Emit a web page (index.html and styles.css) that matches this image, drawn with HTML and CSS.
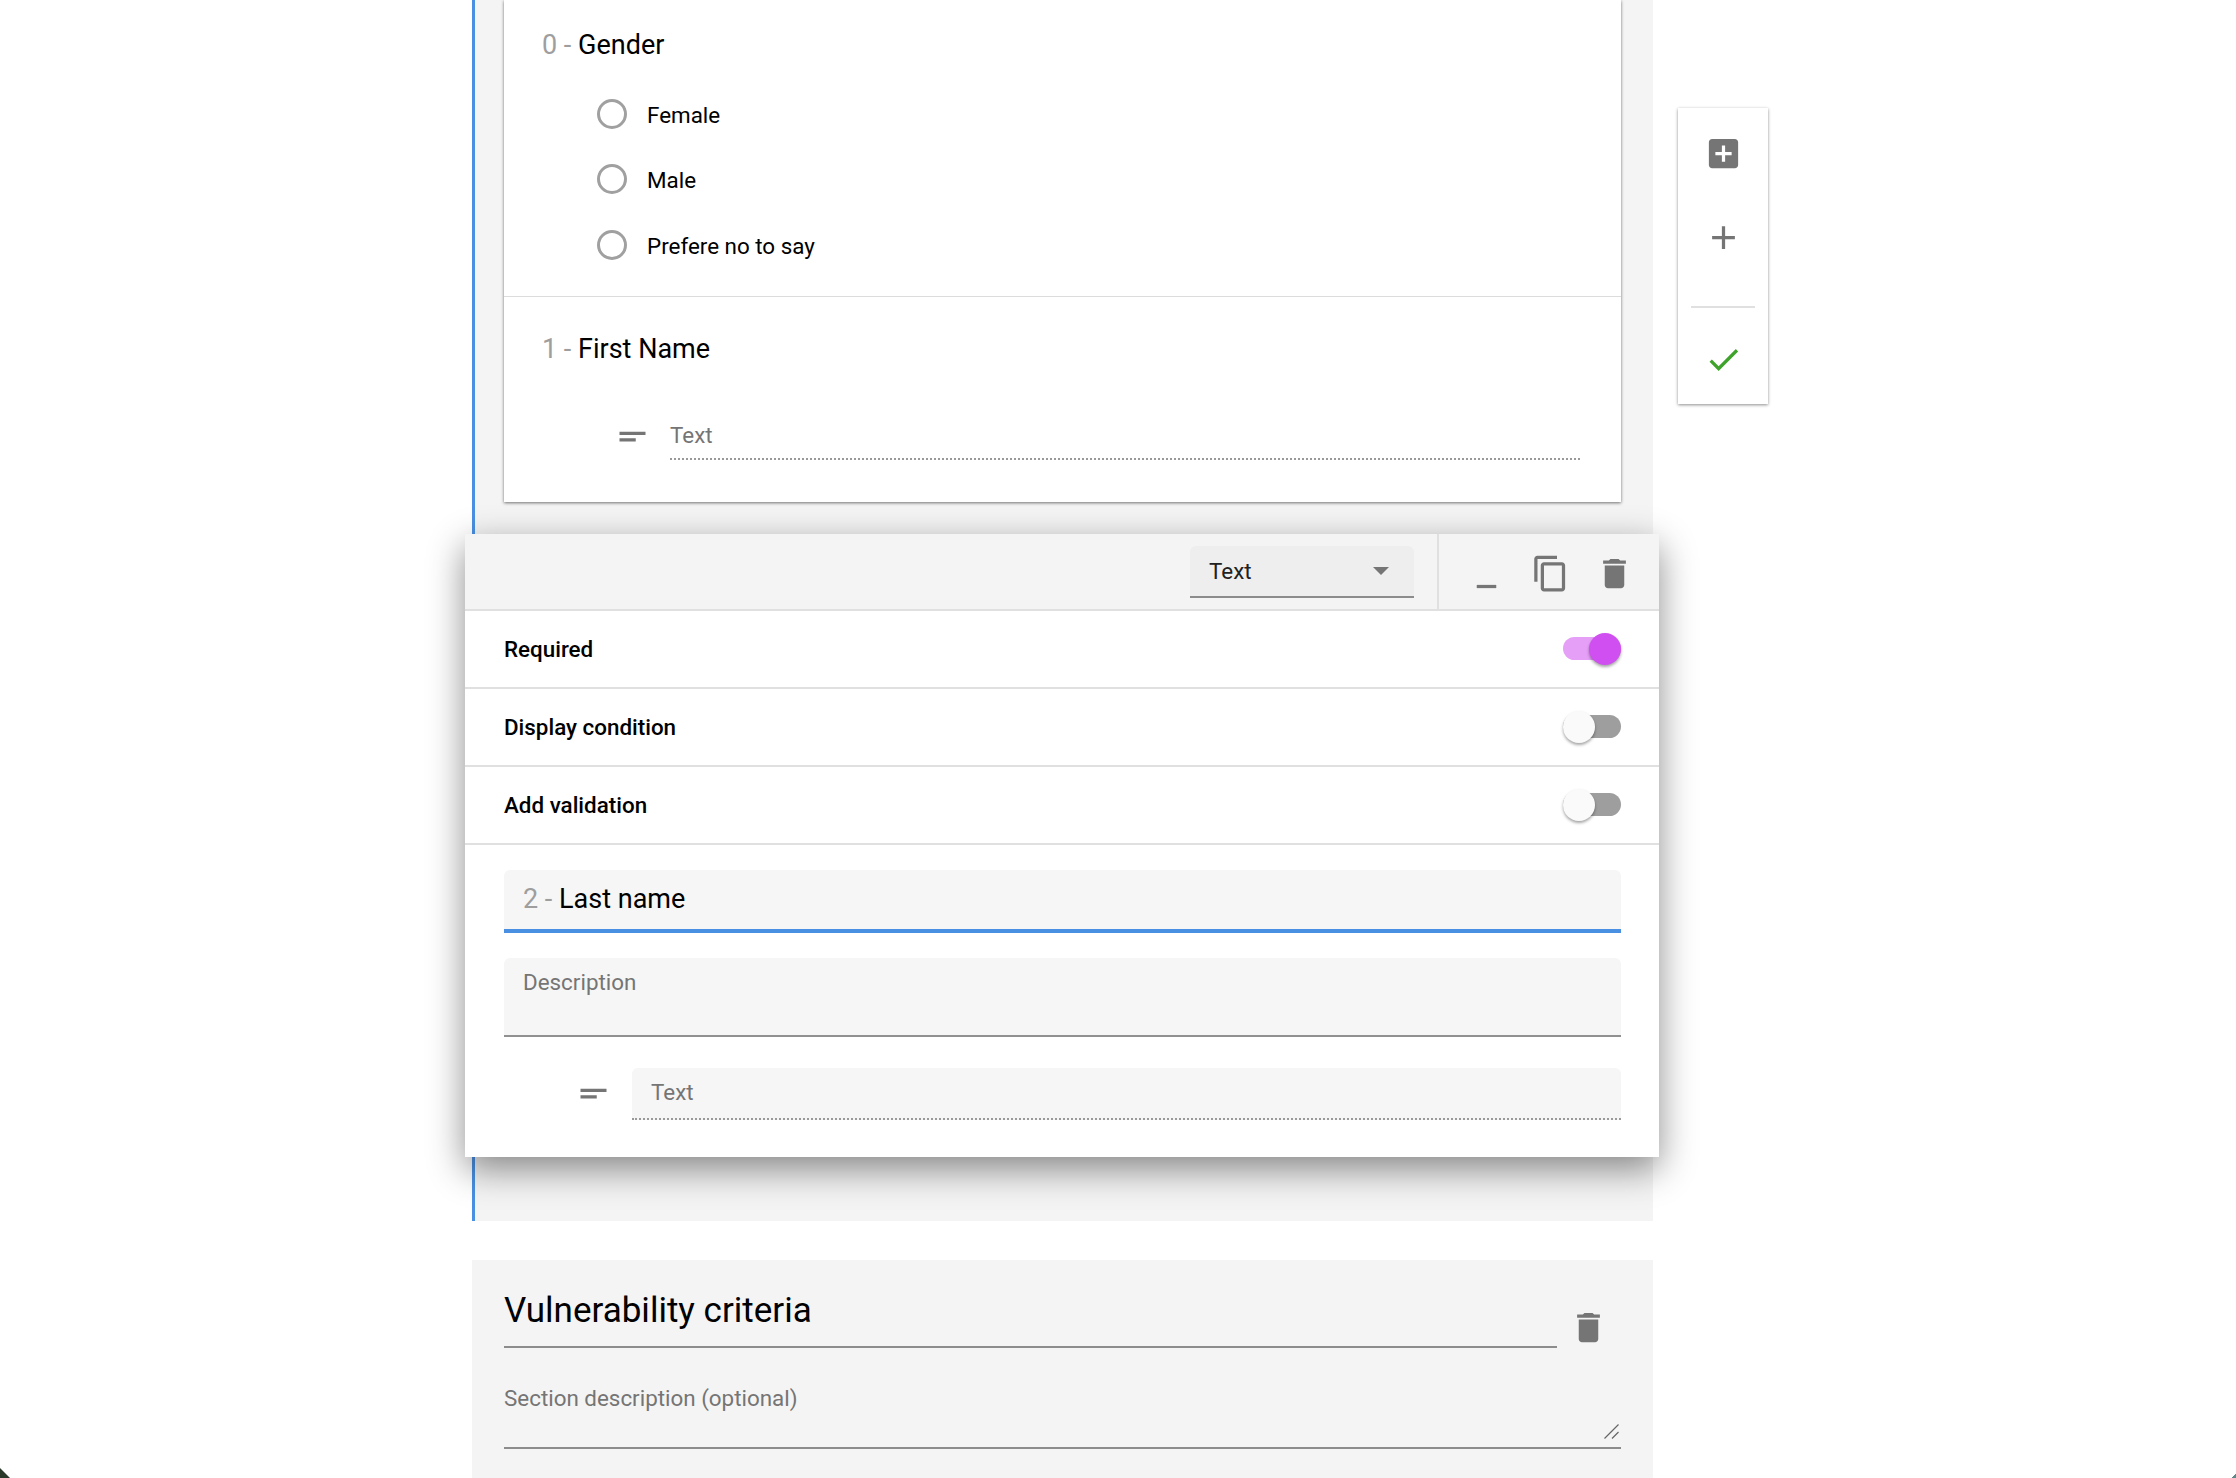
FILE: index.html
```html
<!DOCTYPE html>

<html>
<head>
  <meta http-equiv="CONTENT-TYPE" content="text/html; charset=UTF-8">
  <meta name="viewport" content="width=device-width, initial-scale=1.0"/>
  <title>Form builder</title>
  <link rel="stylesheet" href="styles.css">
</head>
<body>
  <div class="layout">
    <div class="main">
      <section class="section-active">
        <div class="questions">
          <div class="question question-first">
            <div class="q-title"><span class="q-num">0 - </span>Gender</div>
            <div class="option"><span class="radio"></span>Female</div>
            <div class="option"><span class="radio"></span>Male</div>
            <div class="option"><span class="radio"></span>Prefere no to say</div>
          </div>
          <div class="question question-second">
            <div class="q-title"><span class="q-num">1 - </span>First Name</div>
            <div class="answer">
              <svg class="icon" viewBox="0 0 24 24"><path d="M4 9h16v2H4zm0 4h10v2H4z"/></svg>
              <div class="answer-text">Text</div>
            </div>
          </div>
        </div>

        <div class="edit-card">
          <div class="edit-toolbar">
            <div class="type-select">
              <span>Text</span>
              <span class="caret"></span>
            </div>
            <div class="edit-actions">
              <svg class="icon" viewBox="0 0 24 24"><path d="M6 19h12v2H6z"/></svg>
              <svg class="icon" viewBox="0 0 24 24"><path d="M16 1H4c-1.1 0-2 .9-2 2v14h2V3h12V1zm3 4H8c-1.1 0-2 .9-2 2v14c0 1.1.9 2 2 2h11c1.1 0 2-.9 2-2V7c0-1.1-.9-2-2-2zm0 16H8V7h11v14z"/></svg>
              <svg class="icon" viewBox="0 0 24 24"><path d="M6 19c0 1.1.9 2 2 2h8c1.1 0 2-.9 2-2V7H6v12zM19 4h-3.5l-1-1h-5l-1 1H5v2h14V4z"/></svg>
            </div>
          </div>
          <div class="setting">
            <span>Required</span>
            <span class="toggle toggle-on"><span class="thumb"></span></span>
          </div>
          <div class="setting">
            <span>Display condition</span>
            <span class="toggle"><span class="thumb"></span></span>
          </div>
          <div class="setting">
            <span>Add validation</span>
            <span class="toggle"><span class="thumb"></span></span>
          </div>
          <div class="edit-body">
            <div class="field-title"><span class="q-num">2 - </span>Last name</div>
            <div class="field-desc">Description</div>
            <div class="edit-answer">
              <svg class="icon" viewBox="0 0 24 24"><path d="M4 9h16v2H4zm0 4h10v2H4z"/></svg>
              <div class="field-answer">Text</div>
            </div>
          </div>
        </div>
      </section>

      <section class="section-next">
        <div class="section-head">
          <div class="section-title">Vulnerability criteria</div>
          <svg class="icon" viewBox="0 0 24 24"><path d="M6 19c0 1.1.9 2 2 2h8c1.1 0 2-.9 2-2V7H6v12zM19 4h-3.5l-1-1h-5l-1 1H5v2h14V4z"/></svg>
        </div>
        <div class="section-desc">
          Section description (optional)
          <svg class="grip" viewBox="0 0 15 15"><path d="M0.5 14.5L14.5 0.5M8 14.5L14.5 8"/></svg>
        </div>
      </section>
    </div>

    <aside class="side-tools">
      <svg class="icon" viewBox="0 0 24 24"><path d="M19 3H5c-1.11 0-2 .9-2 2v14c0 1.1.89 2 2 2h14c1.1 0 2-.9 2-2V5c0-1.1-.9-2-2-2zm-2 10h-4v4h-2v-4H7v-2h4V7h2v4h4v2z"/></svg>
      <svg class="icon side-add" viewBox="0 0 24 24"><path d="M19 13h-6v6h-2v-6H5v-2h6V5h2v6h6v2z"/></svg>
      <div class="side-line"></div>
      <svg class="icon icon-check" viewBox="0 0 24 24"><path d="M9 16.17L4.83 12l-1.42 1.41L9 19 21 7l-1.41-1.41z"/></svg>
    </aside>
  </div>

  <div class="corner corner-left"></div>
  <div class="corner corner-right"></div>
</body>
</html>
```

FILE: styles.css
```css
html, body {
  height: 1478px;
  overflow: hidden;
}
body {
  margin: 0;
  background: #fff;
  font-family: Roboto, Arial, sans-serif;
  color: #000;
  position: relative;
}
.layout {
  display: flex;
  align-items: flex-start;
  padding-left: 472px;
}
.main {
  width: 1181px;
  flex: none;
}
.icon {
  width: 39px;
  height: 39px;
  flex: none;
  fill: #757575;
  display: block;
}

/* section being edited */
.section-active {
  background: #f4f4f4;
  border-left: 3px solid #4a90e2;
  padding: 0 32px 64px 29px;
}
.questions {
  background: #fff;
  height: 502px;
  box-sizing: border-box;
  box-shadow: 0 1px 3px rgba(0, 0, 0, 0.55);
}
.question-first {
  padding: 27px 0 18px 38px;
  border-bottom: 1px solid #dcdcdc;
}
.question-second {
  padding: 34px 0 0 38px;
}
.q-title {
  font-size: 27px;
  line-height: 36px;
}
.q-num {
  color: #9e9e9e;
}
.option {
  display: flex;
  align-items: center;
  box-sizing: border-box;
  height: 65.5px;
  padding: 2px 0 0 55px;
  font-size: 22.4px;
}
.question-first .q-title {
  margin-bottom: 18px;
}
.radio {
  width: 24px;
  height: 24px;
  border: 3.5px solid #a0a0a0;
  border-radius: 50%;
  margin: 0 20px 2px 0;
}
.answer {
  display: flex;
  align-items: center;
  margin: 50px 41px 0 71px;
  gap: 18px;
}
.answer .icon {
  margin-bottom: 6px;
}
.answer-text {
  flex: 1;
  font-size: 22.4px;
  line-height: 34px;
  color: #757575;
  padding-bottom: 6px;
  border-bottom: 2px dotted #999;
}

/* floating card */
.edit-card {
  margin: 32px -38px 0 -39px;
  background: #fff;
  box-shadow: 0 12px 34px rgba(0, 0, 0, 0.45);
  position: relative;
}
.edit-toolbar {
  display: flex;
  justify-content: flex-end;
  height: 75px;
  background: #f4f4f4;
  border-bottom: 2px solid #e0e0e0;
}
.type-select {
  width: 224px;
  height: 52px;
  box-sizing: border-box;
  margin: 12px 23px 0 0;
  padding: 0 20px 0 19px;
  display: flex;
  align-items: center;
  justify-content: space-between;
  background: #eee;
  border-bottom: 2px solid #8c8c8c;
  border-radius: 6px 6px 0 0;
  font-size: 22.4px;
  color: #212121;
}
.caret {
  width: 0;
  height: 0;
  border-left: 8px solid transparent;
  border-right: 8px solid transparent;
  border-top: 8px solid #757575;
  margin-right: 5px;
}
.edit-actions {
  display: flex;
  gap: 25px;
  padding: 20px 25px 0 28px;
  border-left: 2px solid #e0e0e0;
}
.setting {
  display: flex;
  align-items: center;
  justify-content: space-between;
  height: 75px;
  padding: 0 38px 1px 39px;
  border-bottom: 2px solid #e0e0e0;
  font-size: 22.4px;
  font-weight: 500;
}
.toggle {
  width: 58px;
  height: 23px;
  background: #9e9e9e;
  border-radius: 12px;
  display: flex;
  align-items: center;
}
.thumb {
  width: 32px;
  height: 32px;
  border-radius: 50%;
  background: #fafafa;
  box-shadow: 0 2px 3px rgba(0, 0, 0, 0.35);
}
.toggle-on {
  background: #e59ff7;
  justify-content: flex-end;
}
.toggle-on .thumb {
  background: #d04ff0;
}
.edit-body {
  padding: 25px 38px 37px 39px;
}
.field-title {
  height: 59px;
  line-height: 59px;
  padding-left: 19px;
  background: #f6f6f6;
  border-bottom: 4px solid #4a90e2;
  border-radius: 6px 6px 0 0;
  font-size: 27px;
}
.field-desc {
  height: 77px;
  line-height: 48px;
  padding-left: 19px;
  margin-top: 25px;
  background: #f6f6f6;
  border-bottom: 2px solid #909090;
  border-radius: 6px 6px 0 0;
  font-size: 22.4px;
  color: #757575;
}
.edit-answer {
  display: flex;
  align-items: center;
  margin: 31px 0 0 70px;
  gap: 19px;
}
.edit-answer .icon {
  margin-bottom: 2px;
}
.field-answer {
  flex: 1;
  height: 50px;
  line-height: 48px;
  padding-left: 19px;
  background: #f6f6f6;
  border-bottom: 2px dotted #999;
  border-radius: 6px 6px 0 0;
  font-size: 22.4px;
  color: #757575;
}

/* next section */
.section-next {
  background: #f4f4f4;
  margin-top: 39px;
  height: 230px;
  padding: 0 32px;
}
.section-head {
  display: flex;
  align-items: flex-end;
  padding-top: 26px;
}
.section-title {
  flex: 1;
  height: 60px;
  line-height: 50px;
  font-size: 35px;
  border-bottom: 2px solid #8c8c8c;
}
.section-head .icon {
  margin: 0 13px 1px 12px;
}
.section-desc {
  position: relative;
  height: 65px;
  line-height: 32px;
  margin-top: 34px;
  border-bottom: 2px solid #8c8c8c;
  font-size: 22.4px;
  color: #757575;
}
.grip {
  position: absolute;
  right: 2px;
  bottom: 8px;
  width: 15px;
  height: 15px;
  fill: none;
  stroke: #666;
  stroke-width: 1.2;
}

/* floating tool column */
.side-tools {
  flex: none;
  width: 90px;
  margin: 108px 0 0 25px;
  padding: 26px 0 25px;
  box-sizing: border-box;
  height: 296px;
  background: #fff;
  box-shadow: 0 1px 3px rgba(0, 0, 0, 0.45);
  display: flex;
  flex-direction: column;
  align-items: center;
}
.side-add {
  margin-top: 45px;
}
.side-line {
  width: 64px;
  height: 2px;
  background: #e0e0e0;
  margin: 49px 0 32px;
}
.icon-check {
  fill: #3ea32a;
}

/* window corners */
.corner {
  position: absolute;
  bottom: 0;
}
.corner-left {
  left: 0;
  width: 10px;
  height: 10px;
  background: linear-gradient(45deg, #2a3a2a 45%, transparent 55%);
}
.corner-right {
  right: 0;
  width: 5px;
  height: 4px;
  background: linear-gradient(-45deg, #5a8a8a 45%, transparent 55%);
}
```
